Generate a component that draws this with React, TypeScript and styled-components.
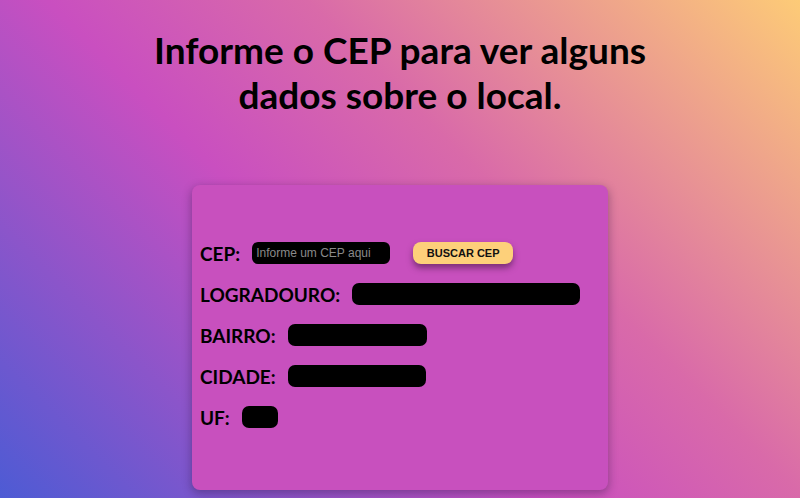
import styled, { createGlobalStyle } from "styled-components";

const GlobalStyle = createGlobalStyle`
  * {
    box-sizing: border-box;
  }
  body {
    margin: 0;
    font-family: Lato, "Open Sans", sans-serif;
  }
`;

const Page = styled.main`
  align-items: center;
  background: linear-gradient(45deg, #4d5bd4 0%, #c94fc0 42%, #d96aa9 62%, #fdcb77 100%);
  display: flex;
  flex-direction: column;
  height: 498px;
  overflow: hidden;
  width: 800px;
`;

const Title = styled.h1`
  color: #000;
  font-size: 37px;
  font-weight: 700;
  line-height: 45px;
  margin: 27px 0 0;
  text-align: center;
  width: 540px;
`;

const Card = styled.section`
  background-color: #c850be;
  border-radius: 8px;
  box-shadow: rgba(40, 20, 60, 0.35) 0px 3px 8px 1px;
  display: flex;
  flex-direction: column;
  gap: 19px;
  height: 305px;
  margin-top: 68px;
  padding: 57px 8px 0;
  width: 416px;
`;

const Row = styled.div`
  align-items: center;
  display: flex;
  height: 22px;
`;

const Label = styled.label`
  color: #000;
  font-size: 19px;
  font-weight: 700;
  margin-right: 12px;
`;

const CepInput = styled.input`
  background: #000;
  border: none;
  border-radius: 6px;
  color: #fff;
  font-family: "Liberation Sans", Arial, sans-serif;
  font-size: 12px;
  height: 22px;
  outline: none;
  padding: 0 4px;
  width: 138px;
  &::placeholder {
    color: #8a8a8a;
  }
`;

const SearchButton = styled.button`
  background: #fdd07a;
  border: none;
  border-radius: 8px;
  box-shadow: rgba(60, 20, 60, 0.55) 0px 4px 6px;
  color: #111;
  cursor: pointer;
  font-family: "Liberation Sans", Arial, sans-serif;
  font-size: 11px;
  font-weight: 700;
  height: 22px;
  margin-left: 23px;
  width: 100px;
`;

const Field = styled.span<{ size: number }>`
  background: #000;
  border-radius: 7px;
  display: block;
  height: 22px;
  width: ${({ size }) => size}px;
`;

const fields = [
  { label: "LOGRADOURO:", size: 228 },
  { label: "BAIRRO:", size: 139 },
  { label: "CIDADE:", size: 138 },
  { label: "UF:", size: 36 },
];

const App = () => {
  return (
    <Page>
      <GlobalStyle />
      <Title>Informe o CEP para ver alguns dados sobre o local.</Title>
      <Card>
        <Row>
          <Label htmlFor="cep">CEP:</Label>
          <CepInput id="cep" placeholder="Informe um CEP aqui" />
          <SearchButton>BUSCAR CEP</SearchButton>
        </Row>
        {fields.map((field) => (
          <Row key={field.label}>
            <Label>{field.label}</Label>
            <Field size={field.size} />
          </Row>
        ))}
      </Card>
    </Page>
  );
};

export default App;
